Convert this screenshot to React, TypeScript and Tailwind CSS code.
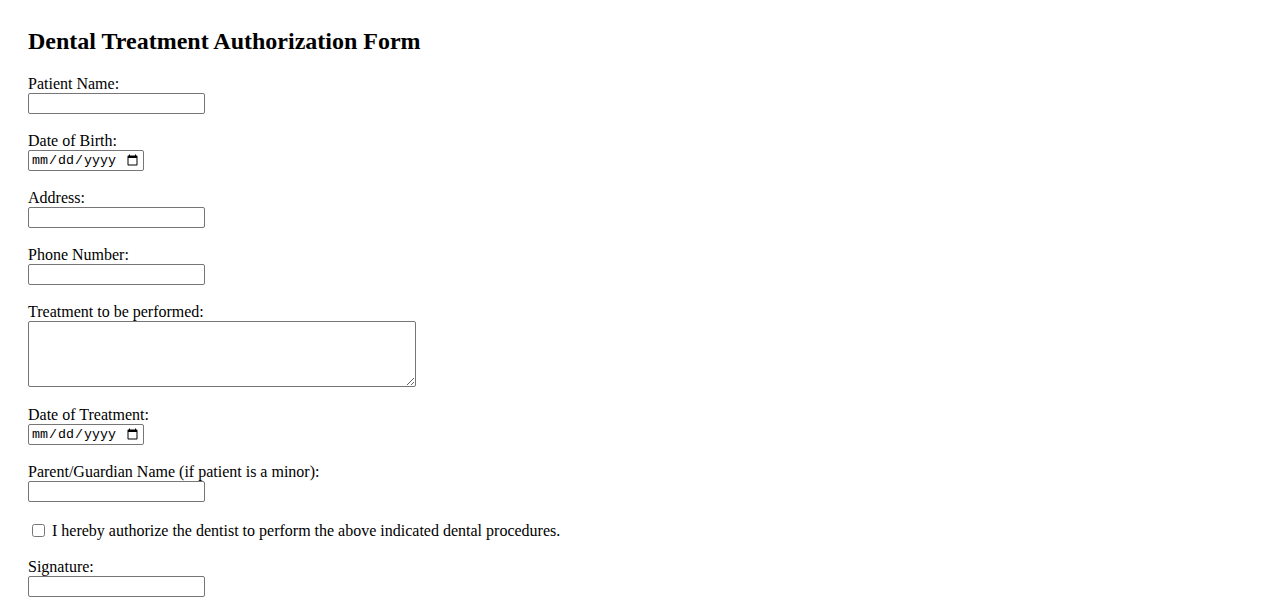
const inputCls =
  "block w-[177px] h-[21px] border border-[#767676] rounded-[2px] bg-white px-[2px] py-[1px] text-[13.33px] font-['Liberation_Sans',Arial,sans-serif]";
const dateCls =
  "block w-[116px] h-[21px] border border-[#767676] rounded-[2px] bg-white px-[2px] py-[1px] text-[13.33px] font-['Liberation_Mono',monospace]";

function Field({ label, type = "text" }: { label: string; type?: string }) {
  return (
    <div className="mb-[18px]">
      <label className="block h-[18px] leading-[18px]">{label}</label>
      <input type={type} className={type === "date" ? dateCls : inputCls} />
    </div>
  );
}

export default function App() {
  return (
    <div className="min-h-screen bg-white text-black px-[28px] pt-[27px] font-['Liberation_Serif','Times_New_Roman',serif] text-[16px]">
      <h2 className="h-[28px] leading-[28px] text-[24px] font-bold mb-[20px]">
        Dental Treatment Authorization Form
      </h2>

      <form>
        <Field label="Patient Name:" />
        <Field label="Date of Birth:" type="date" />
        <Field label="Address:" />
        <Field label="Phone Number:" />

        <div className="mb-[19px]">
          <label className="block h-[18px] leading-[18px]">Treatment to be performed:</label>
          <textarea className="block w-[388px] h-[66px] border border-[#767676] rounded-[2px] bg-white p-[2px] text-[13.33px] font-['Liberation_Mono',monospace]" />
        </div>

        <Field label="Date of Treatment:" type="date" />

        <div className="mb-[18px]">
          <label className="block h-[18px] leading-[18px]">Parent/Guardian Name (if patient is a minor):</label>
          <input type="text" className={inputCls} />
        </div>

        {/* consent */}
        <label className="flex items-center h-[20px] leading-[20px] mb-[18px]">
          <input type="checkbox" className="w-[13px] h-[13px] ml-[4px] mr-[7px] m-0" />
          <span className="mt-[2px]">I hereby authorize the dentist to perform the above indicated dental procedures.</span>
        </label>

        <Field label="Signature:" />
      </form>
    </div>
  );
}
